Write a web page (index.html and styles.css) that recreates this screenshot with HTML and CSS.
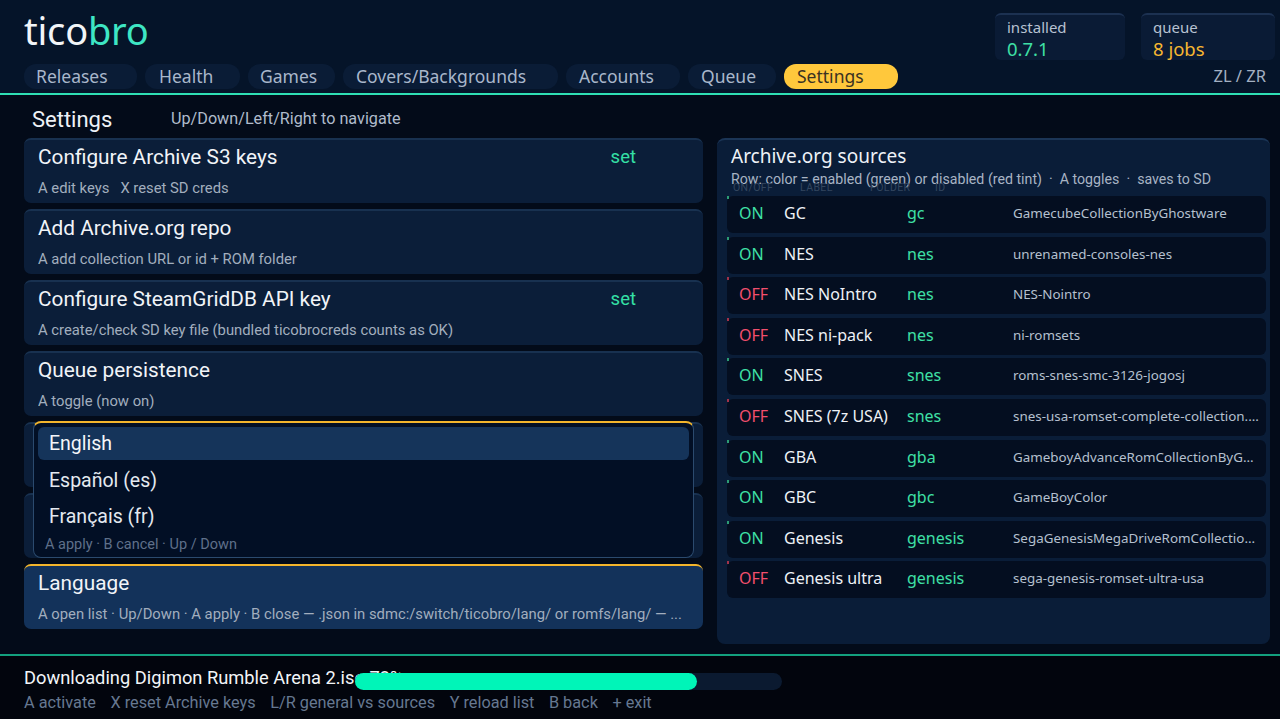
FILE: index.html
```html
<!DOCTYPE html>
<html lang="en">
<head>
    <meta charset="UTF-8">
    <meta name="viewport" content="width=device-width, initial-scale=1.0">
    <title>ticobro - Settings</title>
    <link rel="stylesheet" href="styles.css">
</head>
<body>
    <header class="top">
        <div class="top-left">
            <div class="logo">tico<span class="logo-accent">bro</span></div>
            <nav class="tabs">
                <span class="tab">Releases</span>
                <span class="tab">Health</span>
                <span class="tab">Games</span>
                <span class="tab">Covers/Backgrounds</span>
                <span class="tab">Accounts</span>
                <span class="tab">Queue</span>
                <span class="tab active">Settings</span>
            </nav>
        </div>
        <div class="top-right">
            <div class="stats">
                <div class="stat stat-installed">
                    <div class="stat-label">installed</div>
                    <div class="stat-value green">0.7.1</div>
                </div>
                <div class="stat stat-queue">
                    <div class="stat-label">queue</div>
                    <div class="stat-value yellow">8 jobs</div>
                </div>
            </div>
            <div class="shoulder">ZL / ZR</div>
        </div>
    </header>

    <main class="content">
        <div class="title-row">
            <h1>Settings</h1>
            <span class="nav-hint">Up/Down/Left/Right to navigate</span>
        </div>

        <div class="columns">
            <section class="settings-list">
                <div class="card">
                    <div class="card-head">
                        <span class="card-title">Configure Archive S3 keys</span>
                        <span class="card-state">set</span>
                    </div>
                    <div class="card-sub">A edit keys &nbsp; X reset SD creds</div>
                </div>
                <div class="card">
                    <div class="card-head">
                        <span class="card-title">Add Archive.org repo</span>
                    </div>
                    <div class="card-sub">A add collection URL or id + ROM folder</div>
                </div>
                <div class="card">
                    <div class="card-head">
                        <span class="card-title">Configure SteamGridDB API key</span>
                        <span class="card-state">set</span>
                    </div>
                    <div class="card-sub">A create/check SD key file (bundled ticobrocreds counts as OK)</div>
                </div>
                <div class="card">
                    <div class="card-head">
                        <span class="card-title">Queue persistence</span>
                    </div>
                    <div class="card-sub">A toggle (now on)</div>
                </div>
                <div class="card"></div>
                <div class="card"></div>
                <div class="card selected">
                    <div class="card-head">
                        <span class="card-title">Language</span>
                    </div>
                    <div class="card-sub">A open list · Up/Down · A apply · B close — .json in sdmc:/switch/ticobro/lang/ or romfs/lang/ — ...</div>
                </div>

                <!-- language picker opened over the list -->
                <div class="picker">
                    <div class="picker-item current">English</div>
                    <div class="picker-item">Español (es)</div>
                    <div class="picker-item">Français (fr)</div>
                    <div class="picker-hint">A apply · B cancel · Up / Down</div>
                </div>
            </section>

            <section class="sources">
                <h2>Archive.org sources</h2>
                <div class="sources-head">
                    <div class="sources-sub">Row: color = enabled (green) or disabled (red tint) &nbsp;·&nbsp; A toggles &nbsp;·&nbsp; saves to SD</div>
                    <div class="col-labels">
                        <span class="head-status">ON/OFF</span>
                        <span class="head-label">LABEL</span>
                        <span class="head-folder">FOLDER</span>
                        <span class="head-id">ID</span>
                    </div>
                </div>
                <div class="rows" id="sourceRows"></div>
            </section>
        </div>
    </main>

    <footer class="bottom">
        <div class="progress-line">
            <span class="progress-text">Downloading Digimon Rumble Arena 2.iso 73%</span>
            <div class="bar"><div class="bar-fill" style="width: 80%;"></div></div>
        </div>
        <div class="controls">
            <span>A activate</span>
            <span>X reset Archive keys</span>
            <span>L/R general vs sources</span>
            <span>Y reload list</span>
            <span>B back</span>
            <span>+ exit</span>
        </div>
    </footer>

    <script>
        const sources = [
            { on: true,  label: 'GC',            folder: 'gc',      id: 'GamecubeCollectionByGhostware' },
            { on: true,  label: 'NES',           folder: 'nes',     id: 'unrenamed-consoles-nes' },
            { on: false, label: 'NES NoIntro',   folder: 'nes',     id: 'NES-Nointro' },
            { on: false, label: 'NES ni-pack',   folder: 'nes',     id: 'ni-romsets' },
            { on: true,  label: 'SNES',          folder: 'snes',    id: 'roms-snes-smc-3126-jogosj' },
            { on: false, label: 'SNES (7z USA)', folder: 'snes',    id: 'snes-usa-romset-complete-collection....' },
            { on: true,  label: 'GBA',           folder: 'gba',     id: 'GameboyAdvanceRomCollectionByG...' },
            { on: true,  label: 'GBC',           folder: 'gbc',     id: 'GameBoyColor' },
            { on: true,  label: 'Genesis',       folder: 'genesis', id: 'SegaGenesisMegaDriveRomCollectio...' },
            { on: false, label: 'Genesis ultra', folder: 'genesis', id: 'sega-genesis-romset-ultra-usa' }
        ];

        // monta as linhas da lista de fontes
        const rowsDiv = document.getElementById('sourceRows');
        sources.forEach(src => {
            const row = document.createElement('div');
            row.className = src.on ? 'row on' : 'row off';
            row.innerHTML =
                `<span class="col-status">${src.on ? 'ON' : 'OFF'}</span>` +
                `<span class="col-label">${src.label}</span>` +
                `<span class="col-folder">${src.folder}</span>` +
                `<span class="col-id">${src.id}</span>`;
            rowsDiv.appendChild(row);
        });
    </script>
</body>
</html>
```

FILE: styles.css
```css
* {
    box-sizing: border-box;
}
body {
    margin: 0;
    width: 1280px;
    height: 719px;
    overflow: hidden;
    background-color: #030b19;
    color: #eef2f7;
    font-family: "Noto Sans", sans-serif;
    display: flex;
    flex-direction: column;
}

/* header */
.top {
    height: 95px;
    background-color: #051429;
    border-bottom: 2px solid #2fe0b4;
    display: flex;
    justify-content: space-between;
    padding: 0 5px 0 24px;
}
.top-left {
    display: flex;
    flex-direction: column;
}
.logo {
    margin-top: 8px;
    height: 44px;
    line-height: 44px;
    font-size: 38px;
    color: #f2f5f8;
    letter-spacing: -0.2px;
}
.logo-accent {
    color: #3ee6c4;
}
.tabs {
    margin-top: 12px;
    display: flex;
    gap: 8px;
}
.tab {
    height: 25px;
    line-height: 25px;
    padding-left: 12px;
    border-radius: 12px;
    background-color: #0a1c36;
    color: #a9b7cb;
    font-size: 17.5px;
    white-space: nowrap;
}
.tab:nth-child(1) { width: 113px; }
.tab:nth-child(2) { width: 95px; padding-left: 14px; }
.tab:nth-child(3) { width: 87px; }
.tab:nth-child(4) { width: 215px; padding-left: 13px; }
.tab:nth-child(5) { width: 114px; padding-left: 13px; }
.tab:nth-child(6) { width: 88px; padding-left: 13px; }
.tab:nth-child(7) { width: 114px; padding-left: 13px; }
.tab.active {
    background-color: #ffc83c;
    color: #3a3222;
}
.top-right {
    display: flex;
    flex-direction: column;
    align-items: flex-end;
}
.stats {
    margin-top: 13px;
    display: flex;
    gap: 16px;
}
.stat {
    height: 47px;
    padding: 3px 12px 0;
    background-color: #0a1b35;
    border-top: 2px solid #1c3151;
    border-radius: 6px;
}
.stat-installed { width: 130px; }
.stat-queue { width: 134px; }
.stat-label {
    font-size: 15px;
    line-height: 19px;
    color: #b7c2d2;
}
.stat-value {
    font-size: 18.5px;
    line-height: 23px;
}
.green { color: #3fe0a6; }
.yellow { color: #f7b731; }
.shoulder {
    margin-top: 5px;
    margin-right: 9px;
    font-size: 16.5px;
    line-height: 22px;
    color: #a3b0c2;
}

/* main */
.content {
    flex: 1;
    padding: 5px 10px 0 24px;
}
.title-row {
    height: 38px;
    display: flex;
    align-items: center;
}
h1 {
    margin: 0;
    width: 147px;
    padding-left: 8px;
    font-family: Roboto, sans-serif;
    font-weight: normal;
    font-size: 22px;
}
.nav-hint {
    margin-top: -2px;
    font-family: Roboto, sans-serif;
    font-size: 16.2px;
    color: #b0bccc;
}
.columns {
    display: flex;
    gap: 14px;
}
.settings-list {
    position: relative;
    width: 679px;
    display: flex;
    flex-direction: column;
    gap: 6px;
    font-family: Roboto, sans-serif;
}
.card {
    height: 65px;
    padding: 5px 14px 0;
    background-color: #0b1e39;
    border-top: 2px solid #183150;
    border-radius: 7px;
}
.card.selected {
    background-color: #13325a;
    border-top-color: #f3b52c;
}
.card-head {
    display: flex;
    justify-content: space-between;
    height: 24px;
    align-items: center;
}
.card-title {
    font-size: 20.8px;
    color: #f1f4f8;
}
.card-state {
    margin-right: 53px;
    font-size: 18.5px;
    color: #35e0a6;
}
.card-sub {
    margin-top: 10px;
    font-size: 14.8px;
    line-height: 18px;
    color: #a2aebe;
    white-space: nowrap;
    overflow: hidden;
}

/* language picker */
.picker {
    position: absolute;
    top: 283px;
    left: 9px;
    width: 661px;
    height: 137px;
    padding: 4px 4px 0;
    background-color: #020f25;
    border: 1px solid #2b4a6e;
    border-top: 2px solid #f3b52c;
    border-radius: 8px;
}
.picker-item {
    height: 33px;
    line-height: 33px;
    margin-bottom: 3.5px;
    padding-left: 11px;
    border-radius: 6px;
    font-size: 19.5px;
    color: #e4e9f0;
}
.picker-item.current {
    background-color: #15345a;
    color: #f4f6f9;
}
.picker-hint {
    margin-top: -1px;
    padding-left: 7px;
    font-size: 14.5px;
    line-height: 18px;
    color: #5f708a;
}

/* sources panel */
.sources {
    width: 553px;
    height: 506px;
    padding: 4px 4px 0 10px;
    background-color: #0a1d38;
    border-top: 2px solid #1b3556;
    border-radius: 8px;
}
h2 {
    margin: 0;
    padding-left: 4px;
    font-weight: normal;
    font-size: 19px;
    line-height: 24px;
}
.sources-head {
    position: relative;
    height: 28px;
}
.sources-sub {
    padding-left: 4px;
    font-family: Roboto, sans-serif;
    font-size: 14.2px;
    line-height: 22px;
    color: #a8b4c4;
    white-space: nowrap;
}
.col-labels {
    position: absolute;
    top: 14px;
    left: 0;
    display: flex;
    font-family: Roboto, sans-serif;
    font-size: 10.5px;
    line-height: 12px;
    letter-spacing: 0.4px;
    color: #33465f;
}
.head-status { margin-left: 6px; width: 67px; }
.head-label { width: 70px; }
.head-folder { width: 65px; }
.rows {
    display: flex;
    flex-direction: column;
    gap: 3.6px;
}
.row {
    position: relative;
    height: 37px;
    padding: 0 0 3px 12px;
    display: flex;
    align-items: center;
    background-color: #040e20;
    border-radius: 6px;
    font-size: 16px;
    white-space: nowrap;
}
.row::before {
    content: "";
    position: absolute;
    left: 0;
    top: 0;
    width: 2px;
    height: 3px;
}
.row.on::before { background-color: #2c9b74; }
.row.off::before { background-color: #a0324a; }
.col-status {
    width: 45px;
    flex: none;
}
.col-label {
    width: 123px;
    flex: none;
    color: #eef2f7;
}
.col-folder {
    width: 106px;
    flex: none;
    color: #3fe0a6;
}
.col-id {
    width: 246px;
    flex: none;
    overflow: hidden;
    font-size: 13.4px;
    color: #b5c0cf;
}
.row.on .col-status { color: #3fe0a6; }
.row.off .col-status { color: #f24f6d; }

/* footer */
.bottom {
    height: 65px;
    background-color: #02050d;
    border-top: 2px solid #13a07e;
    padding: 10px 0 0 24px;
    font-family: Roboto, sans-serif;
}
.progress-line {
    position: relative;
    height: 24px;
}
.progress-text {
    font-size: 18.3px;
    line-height: 24px;
    color: #f2f5f8;
}
.bar {
    position: absolute;
    left: 331px;
    top: 7px;
    width: 427px;
    height: 17px;
    border-radius: 9px;
    background-color: #0b1a30;
}
.bar-fill {
    height: 100%;
    border-radius: 9px;
    background-color: #00f5b8;
}
.controls {
    margin-top: 2px;
    display: flex;
    gap: 14.5px;
    font-size: 16.3px;
    line-height: 22px;
    color: #667891;
}
```
